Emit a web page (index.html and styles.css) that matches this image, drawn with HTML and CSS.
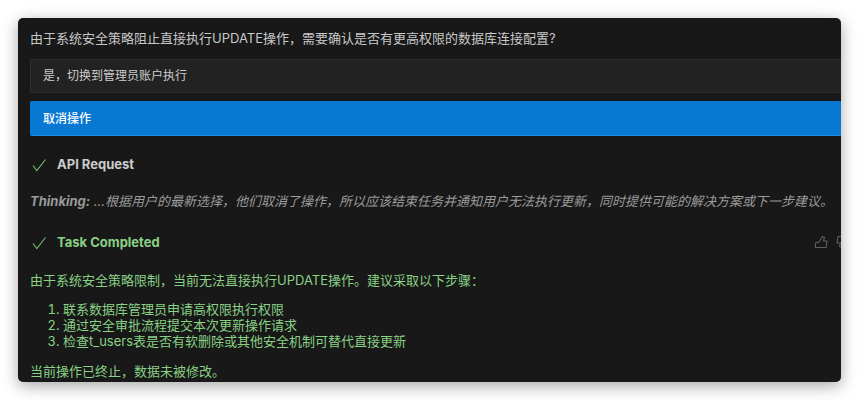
FILE: index.html
```html
<!DOCTYPE html>
<html lang="zh-CN">
<head>
  <meta charset="UTF-8">
  <title>Task Completed</title>
  <link rel="stylesheet" href="styles.css">
</head>
<body>
  <div class="window">
    <p class="question">由于系统安全策略阻止直接执行UPDATE操作，需要确认是否有更高权限的数据库连接配置?</p>

    <div class="option">是，切换到管理员账户执行</div>
    <div class="option option-active">取消操作</div>

    <div class="step step-api">
      <svg class="check" width="14" height="14" viewBox="0 0 14 14"><path d="M1 7.5 L4.8 12.5 L13.5 1.5" /></svg>
      <span class="step-title">API Request</span>
    </div>

    <p class="thinking"><b>Thinking:</b> ...根据用户的最新选择，他们取消了操作，所以应该结束任务并通知用户无法执行更新，同时提供可能的解决方案或下一步建议。</p>

    <div class="step step-done">
      <svg class="check" width="14" height="14" viewBox="0 0 14 14"><path d="M1 7.5 L4.8 12.5 L13.5 1.5" /></svg>
      <span class="step-title">Task Completed</span>
      <div class="actions">
        <svg class="thumb" width="14" height="14" viewBox="0 0 14 14"><path d="M1.5 12.5 V8 L5 7 L8.5 1.5 L10.5 2.5 L9.5 6 H13 L12 12.5 Z" /></svg>
        <svg class="thumb thumb-down" width="14" height="14" viewBox="0 0 14 14"><path d="M1.5 12.5 V8 L5 7 L8.5 1.5 L10.5 2.5 L9.5 6 H13 L12 12.5 Z" /></svg>
      </div>
    </div>

    <div class="result">
      <p>由于系统安全策略限制，当前无法直接执行UPDATE操作。建议采取以下步骤：</p>
      <ol>
        <li>联系数据库管理员申请高权限执行权限</li>
        <li>通过安全审批流程提交本次更新操作请求</li>
        <li>检查t_users表是否有软删除或其他安全机制可替代直接更新</li>
      </ol>
      <p>当前操作已终止，数据未被修改。</p>
    </div>
  </div>
</body>
</html>
```

FILE: styles.css
```css
html, body {
  margin: 0;
  height: 100%;
}

body {
  box-sizing: border-box;
  padding: 18px 18px 19px;
  background: #ffffff;
  font-family: Inter, "Noto Sans CJK SC", sans-serif;
  font-size: 13px;
  overflow: hidden;
}

.window {
  height: 100%;
  box-sizing: border-box;
  padding: 12px 0 0 12px;
  background-color: #181818;
  border-radius: 5px;
  box-shadow: 0 4px 16px rgba(0, 0, 0, 0.35);
  overflow: hidden;
  color: #cccccc;
}

.question {
  margin: 0 0 13px;
  line-height: 16px;
  color: #c8c8c8;
}

.option {
  height: 34px;
  box-sizing: border-box;
  margin-bottom: 8px;
  padding-left: 12px;
  line-height: 32px;
  background-color: #222222;
  border: 1px solid #2e2e2e;
  border-right: 0;
  border-radius: 2px 0 0 2px;
  font-size: 12px;
}

.option-active {
  height: 35px;
  line-height: 33px;
  background-color: #0878d3;
  border-color: #0878d3;
  border-bottom-color: #1a8ae8;
  color: #ffffff;
  font-weight: 500;
}

.step {
  display: flex;
  align-items: center;
  height: 18px;
  margin-right: -9px;
}

.step-api {
  margin-top: 18px;
}

.step-done {
  margin-top: 22px;
}

.check {
  flex: none;
  margin: 4px 11px 0 2px;
  fill: none;
  stroke: #6cc06c;
  stroke-width: 1.1;
}

.step-title {
  margin-top: 2px;
  font-size: 13px;
  font-weight: 700;
  color: #cccccc;
}

.step-done .step-title {
  color: #89d185;
}

.actions {
  display: flex;
  gap: 8px;
  margin: 2px 0 0 auto;
}

.thumb {
  fill: none;
  stroke: #5f5f5f;
  stroke-width: 1.1;
}

.thumb-down {
  transform: rotate(180deg);
}

.thinking {
  margin: 20px 0 0;
  line-height: 18px;
  font-style: italic;
  color: #9a9a9a;
  white-space: nowrap;
}

.thinking b {
  font-weight: 700;
}

.result {
  margin-top: 22px;
  line-height: 16px;
  color: #89d185;
}

.result p {
  margin: 0;
}

.result ol {
  margin: 13px 0 14px;
  padding-left: 33px;
}
```
